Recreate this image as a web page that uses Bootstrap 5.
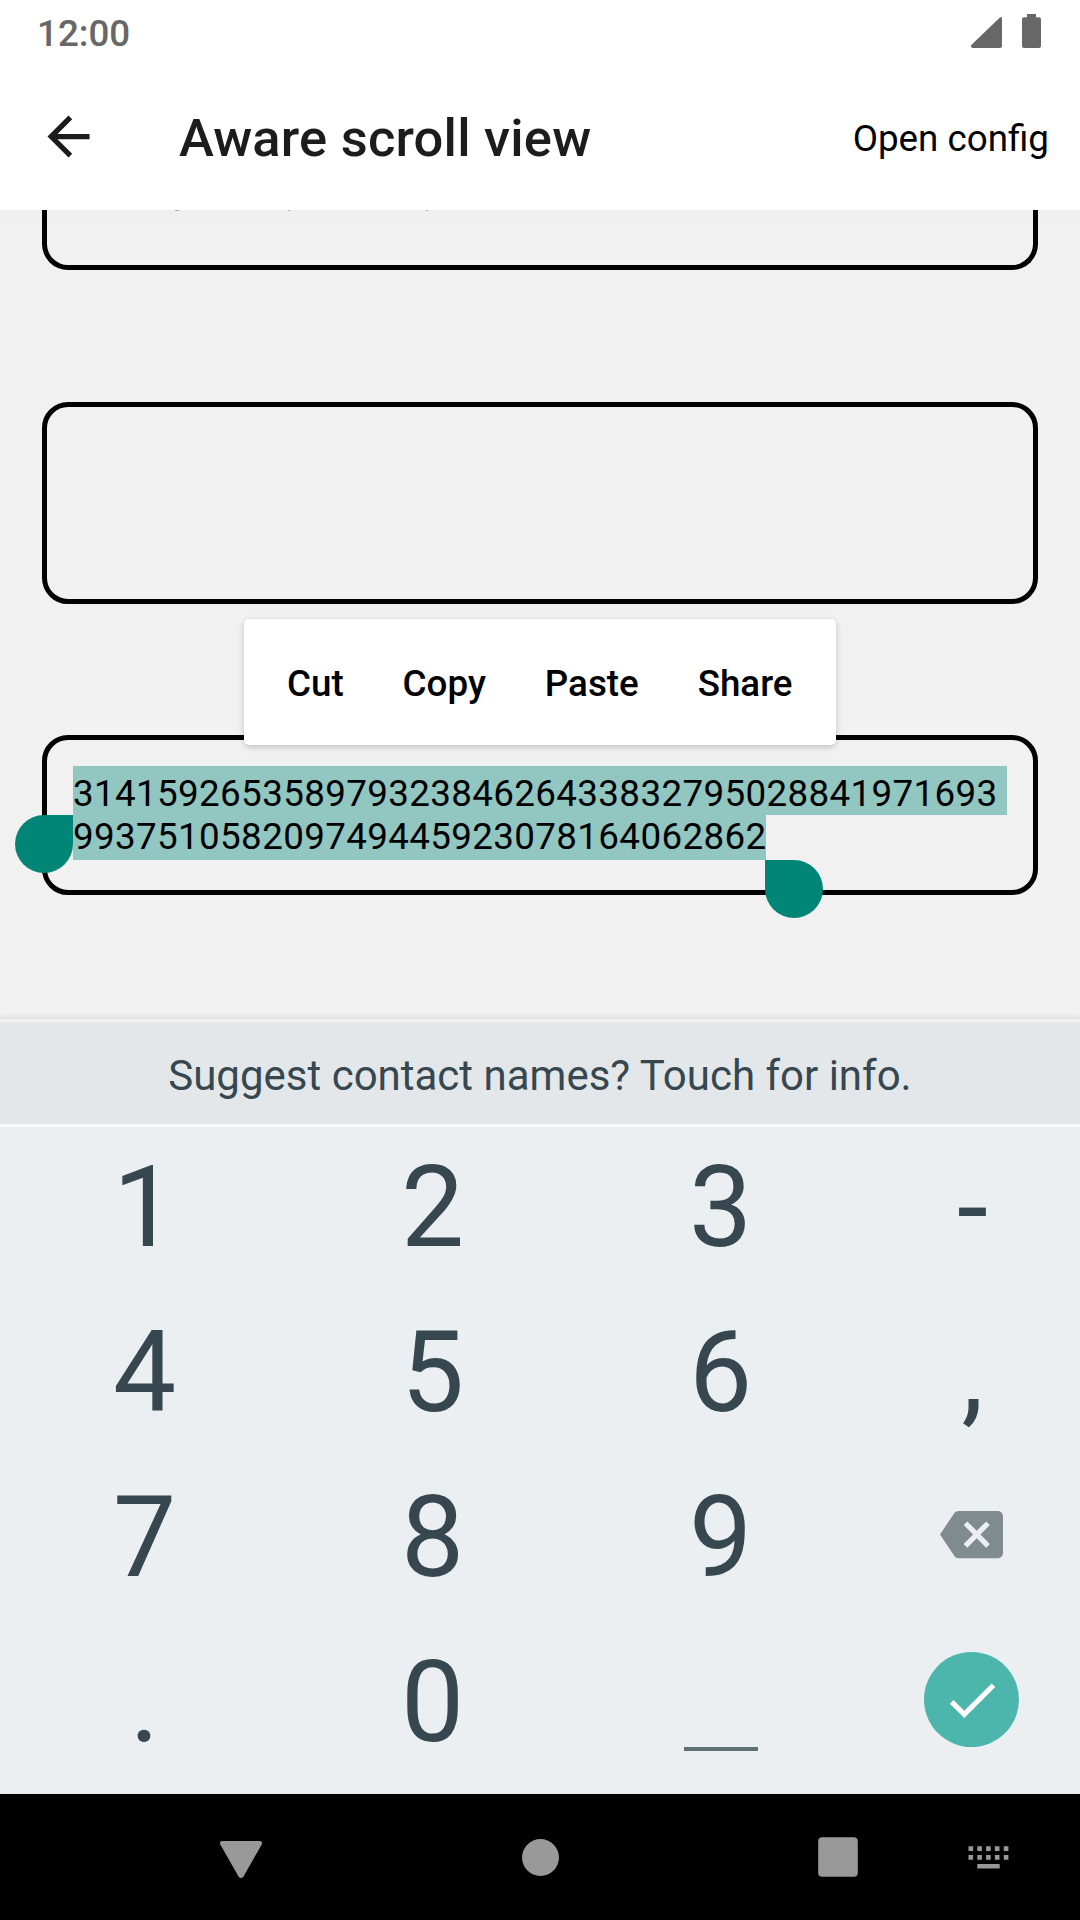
<!DOCTYPE html>
<html lang="en">
<head>
<meta charset="utf-8">
<meta name="viewport" content="width=device-width, initial-scale=1">
<title>Aware scroll view</title>
<link href="https://cdn.jsdelivr.net/npm/bootstrap@5.3.0/dist/css/bootstrap.min.css" rel="stylesheet">
<style>
  body { font-family: Roboto, "Liberation Sans", sans-serif; font-size: 36.75px; background: #f1f1f1; color: #000; width: 1080px; height: 1920px; overflow: hidden; }
  svg { display: block; flex: none; }
  .status-bar { height: 63px; padding: 4px 39px 0 37px; color: #676767; font-weight: 500; line-height: 59px; }
  .status-icons { margin-top: -5px; }
  .app-bar { height: 147px; padding: 0 31px 0 37px; }
  .app-title { font-size: 52.5px; font-weight: 500; color: #1c1c1e; line-height: 62px; margin-left: 79px; padding-top: 3px; letter-spacing: .2px; }
  .app-action { line-height: 44px; padding-top: 5px; }
  .scroll-area { height: 809px; padding: 0 42px; gap: 131px; background: linear-gradient(#efefef, #f1f1f1 14px); box-shadow: inset 0 -7px 6px -5px rgba(0,0,0,.09); }
  .field { border: 5px solid #000; border-radius: 26px; flex: none; }
  .field-cut { height: 60px; border-top: 0; border-radius: 0 0 26px 26px; }
  .field-tall { height: 202px; margin-top: 1px; }
  .field-digits { height: 160px; padding: 26px 26px 0; }
  .digits { line-height: 43px; letter-spacing: .36px; font-size: 36.75px; white-space: nowrap; padding-top: 6px; }
  .sel { background: #92c6c0; left: 26px; }
  .sel-a { top: 26px; width: 934px; height: 49px; }
  .sel-b { top: 75px; width: 693px; height: 45px; }
  .grip { width: 58px; height: 58px; background: #008577; }
  .grip-start { left: -32px; top: 75px; border-radius: 50% 0 50% 50%; }
  .grip-end { left: 718px; top: 120px; border-radius: 0 50% 50% 50%; }
  .edit-menu { left: 197px; top: -121px; width: 592px; height: 126px; border-radius: 5px; box-shadow: 0 2px 6px rgba(0,0,0,.2); font-weight: 500; padding: 4px 43.5px 0 43px; z-index: 2; }
  .suggest { height: 108px; background: #e3e7ea; border-top: 3px solid #eff1f2; border-bottom: 3px solid #f6f8f9; color: #37474f; font-size: 42px; padding-top: 5px; }
  .keyboard { height: 667px; padding-top: 7px; background: #ebeff2; color: #37474f; }
  .key { height: 165px; width: 288px; padding: 0 0 17px 1px; font-size: 112.4px; line-height: 1; }
  .key-side { width: 216px; }
  .key-icon { padding: 0 1px 24px 0; }
  .space-bar { width: 74px; height: 4.5px; background: #5f6f73; margin-top: 92px; }
  .enter-key { width: 95px; height: 95px; background: #4db6ac; }
  .nav-keys { height: 126px; background: #000; }
</style>
</head>
<body>
<header class="bg-white">
  <div class="status-bar d-flex justify-content-between align-items-center">
    <span>12:00</span>
    <svg class="status-icons" width="70" height="34" viewBox="0 0 70 34" fill="#676767"><path d="M0 32.3Q0 31.5.8 30.6L28.6 3.8Q31 2 31 4.6V32Q31 34 29 34H1.8Q0 34 0 32.3Z"/><path d="M56 0h9v3.3h3q2 0 2 2V32q0 2-2 2H53q-2 0-2-2V5.300q0-2 2-2h3z"/></svg>
  </div>
  <div class="app-bar d-flex align-items-center">
    <svg width="63" height="63" viewBox="0 0 24 24" fill="#1c1c1e"><path d="M20 11H7.830l5.590-5.590L12 4l-8 8 8 8 1.410-1.410L7.830 13H20v-2z"/></svg>
    <h1 class="app-title mb-0">Aware scroll view</h1>
    <span class="app-action ms-auto">Open config</span>
  </div>
</header>
<main class="scroll-area d-flex flex-column">
  <div class="field field-cut">
    <svg width="400" height="2" fill="#aaa"><path d="M128 0h4v1h-4zM241 0h2v1h-2zM379 0h2v1h-2z"/></svg>
  </div>
  <div class="field field-tall"></div>
  <div class="field field-digits position-relative">
    <div class="sel sel-a position-absolute"></div>
    <div class="sel sel-b position-absolute"></div>
    <div class="digits position-relative">31415926535897932384626433832795028841971693<br>993751058209749445923078164062862</div>
    <div class="grip grip-start position-absolute"></div>
    <div class="grip grip-end position-absolute"></div>
    <div class="edit-menu bg-white position-absolute d-flex align-items-center justify-content-between">
      <span>Cut</span><span>Copy</span><span>Paste</span><span>Share</span>
    </div>
  </div>
</main>
<div class="suggest d-flex align-items-center justify-content-center"><span>Suggest contact names? Touch for info.</span></div>
<section class="keyboard">
  <div class="d-flex">
    <div class="key d-flex align-items-center justify-content-center">1</div>
    <div class="key d-flex align-items-center justify-content-center">2</div>
    <div class="key d-flex align-items-center justify-content-center">3</div>
    <div class="key key-side d-flex align-items-center justify-content-center">-</div>
  </div>
  <div class="d-flex">
    <div class="key d-flex align-items-center justify-content-center">4</div>
    <div class="key d-flex align-items-center justify-content-center">5</div>
    <div class="key d-flex align-items-center justify-content-center">6</div>
    <div class="key key-side d-flex align-items-center justify-content-center">,</div>
  </div>
  <div class="d-flex">
    <div class="key d-flex align-items-center justify-content-center">7</div>
    <div class="key d-flex align-items-center justify-content-center">8</div>
    <div class="key d-flex align-items-center justify-content-center">9</div>
    <div class="key key-side key-icon d-flex align-items-center justify-content-center">
      <svg width="63" height="63" viewBox="0 0 24 24" fill="#808b90"><path d="M22 3H7c-.69 0-1.230.35-1.590.88L0 12l5.410 8.110c.36.53.9.89 1.590.89h15c1.100 0 2-.9 2-2V5c0-1.100-.9-2-2-2zm-3 12.590L17.590 17 14 13.410 10.410 17 9 15.590 12.590 12 9 8.410 10.410 7 14 10.590 17.590 7 19 8.410 15.410 12 19 15.590z"/></svg>
    </div>
  </div>
  <div class="d-flex">
    <div class="key d-flex align-items-center justify-content-center">.</div>
    <div class="key d-flex align-items-center justify-content-center">0</div>
    <div class="key d-flex align-items-center justify-content-center"><div class="space-bar"></div></div>
    <div class="key key-side key-icon d-flex align-items-center justify-content-center">
      <div class="enter-key rounded-circle d-flex align-items-center justify-content-center">
        <svg width="62" height="62" viewBox="0 0 24 24" fill="#fff"><path d="M9 16.170L4.830 12l-1.420 1.410L9 19 21 7l-1.410-1.410z"/></svg>
      </div>
    </div>
  </div>
</section>
<nav class="nav-keys">
  <svg width="1080" height="126" viewBox="0 0 1080 126" fill="#999">
    <path d="M222.500 47h37q3.500 0 2.200 3.500L243.500 82.500q-2.500 3-5 0L220.300 50.500Q219 47 222.500 47Z"/>
    <circle cx="540.500" cy="63.500" r="18.500"/>
    <rect x="818.200" y="43.200" width="39.600" height="39.600" rx="4"/>
    <path d="M968.500 52.300h4.600v4.600h-4.600zM977.300 52.300h4.600v4.600h-4.600zM986.100 52.300h4.600v4.600h-4.600zM994.900 52.300h4.600v4.600h-4.600zM1003.800 52.300h4.600v4.600h-4.600zM968.500 61.100h4.600v4.600h-4.600zM977.300 61.100h4.600v4.600h-4.600zM986.100 61.100h4.600v4.600h-4.600zM994.900 61.100h4.600v4.600h-4.600zM1003.800 61.100h4.600v4.600h-4.600zM977.300 70h22.400v4.600h-22.400z"/>
  </svg>
</nav>
<script src="https://cdn.jsdelivr.net/npm/bootstrap@5.3.0/dist/js/bootstrap.bundle.min.js"></script>
</body>
</html>
